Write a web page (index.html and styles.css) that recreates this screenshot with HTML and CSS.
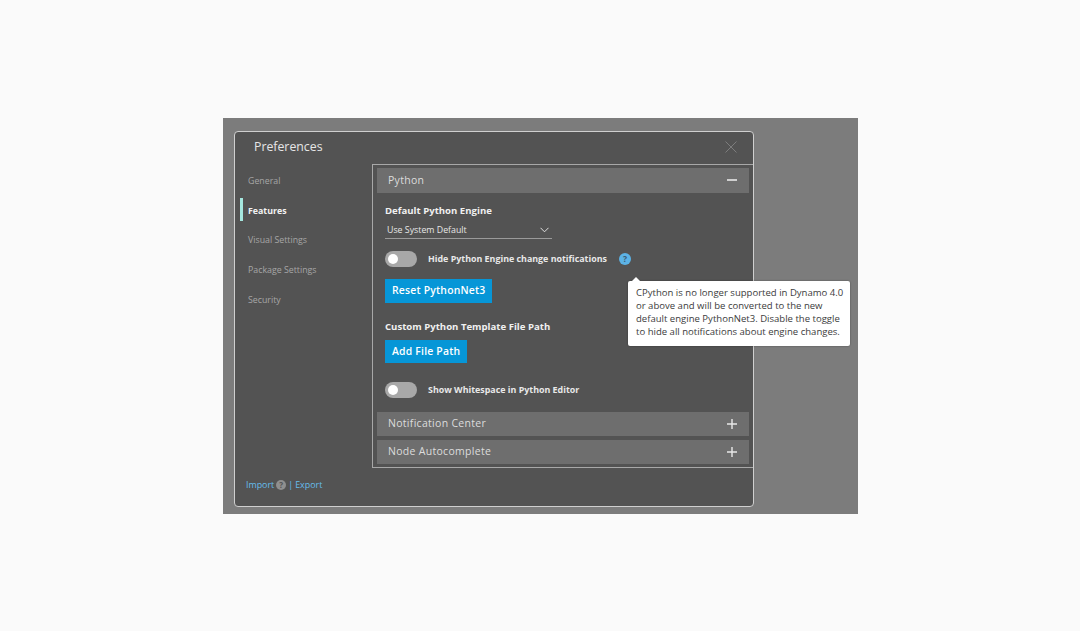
FILE: index.html
```html
<!DOCTYPE html>
<html lang="en">
<head>
    <meta charset="UTF-8">
    <meta name="viewport" content="width=device-width, initial-scale=1.0">
    <title>Preferences</title>
    <link rel="stylesheet" href="styles.css">
</head>
<body>
    <div class="backdrop">
        <div class="dialog">
            <div class="titlebar">
                <span class="title">Preferences</span>
                <svg class="close" width="12" height="12" viewBox="0 0 12 12"><path d="M0.5 0.5L11.5 11.5M11.5 0.5L0.5 11.5" stroke="#7d7d7d" stroke-width="1" fill="none"/></svg>
            </div>
            <div class="content">
                <div class="sidebar">
                    <div class="nav">
                        <div class="nav-item">General</div>
                        <div class="nav-item active">Features</div>
                        <div class="nav-item">Visual Settings</div>
                        <div class="nav-item">Package Settings</div>
                        <div class="nav-item">Security</div>
                    </div>
                    <div class="footer">
                        <span class="link">Import</span>
                        <span class="footer-help">?</span>
                        <span class="link">|</span>
                        <span class="link">Export</span>
                    </div>
                </div>
                <div class="panel">
                    <div class="section-head">
                        <span>Python</span>
                        <svg width="10" height="10" viewBox="0 0 10 10"><path d="M0 5H10" stroke="#e8e8e8" stroke-width="1.6"/></svg>
                    </div>
                    <div class="section-body">
                        <div class="label first">Default Python Engine</div>
                        <div class="select">
                            <span>Use System Default</span>
                            <svg width="9" height="6" viewBox="0 0 9 6"><path d="M0.5 0.8L4.5 4.8L8.5 0.8" stroke="#e0e0e0" stroke-width="1" fill="none"/></svg>
                        </div>
                        <div class="toggle-row">
                            <span class="toggle"><span class="knob"></span></span>
                            <span class="toggle-label">Hide Python Engine change notifications</span>
                            <span class="help">?</span>
                        </div>
                        <div class="btn reset">Reset PythonNet3</div>
                        <div class="label custom">Custom Python Template File Path</div>
                        <div class="btn add">Add File Path</div>
                        <div class="toggle-row second">
                            <span class="toggle"><span class="knob"></span></span>
                            <span class="toggle-label">Show Whitespace in Python Editor</span>
                        </div>
                    </div>
                    <div class="section-head closed">
                        <span>Notification Center</span>
                        <svg width="10" height="10" viewBox="0 0 10 10"><path d="M0 5H10M5 0V10" stroke="#e8e8e8" stroke-width="1.4"/></svg>
                    </div>
                    <div class="section-head closed last">
                        <span>Node Autocomplete</span>
                        <svg width="10" height="10" viewBox="0 0 10 10"><path d="M0 5H10M5 0V10" stroke="#e8e8e8" stroke-width="1.4"/></svg>
                    </div>
                </div>
            </div>
        </div>
        <div class="tooltip">
            CPython is no longer supported in Dynamo 4.0<br>
            or above and will be converted to the new<br>
            default engine PythonNet3. Disable the toggle<br>
            to hide all notifications about engine changes.
        </div>
    </div>
</body>
</html>
```

FILE: styles.css
```css
* {
    box-sizing: border-box;
}

body {
    margin: 0;
    height: 631px;
    padding: 118px 222px 0 223px;
    background-color: #fafafa;
    font-family: "Open Sans", "Noto Sans", sans-serif;
    overflow: hidden;
}

.backdrop {
    position: relative;
    width: 635px;
    height: 396px;
    padding: 13px 0 0 11px;
    background-color: #7c7c7c;
}

.dialog {
    width: 520px;
    height: 376px;
    background-color: #535353;
    border: 1px solid #cfcfcf;
    border-radius: 4px;
    display: flex;
    flex-direction: column;
}

.titlebar {
    height: 32px;
    flex: none;
    display: flex;
    align-items: center;
    justify-content: space-between;
    padding: 0 16px 4px 19px;
}

.title {
    font-size: 12.3px;
    color: #e6e6e6;
}

.close {
    margin-top: 2px;
}

.content {
    flex: 1;
    display: flex;
}

.sidebar {
    width: 137px;
    flex: none;
    display: flex;
    flex-direction: column;
    justify-content: space-between;
    padding: 2px 0 15px 0;
}

.nav-item {
    height: 29.75px;
    display: flex;
    align-items: center;
    padding-left: 13px;
    font-size: 8.8px;
    color: #a6a6a6;
}

.nav-item.active {
    color: #f2f2f2;
    font-weight: 700;
    position: relative;
}

.nav-item.active::before {
    content: "";
    position: absolute;
    left: 5px;
    top: 2px;
    width: 3px;
    height: 23px;
    background-color: #a5e8e0;
}

.footer {
    display: flex;
    align-items: center;
    gap: 2px;
    padding-left: 11px;
    font-size: 8.9px;
}

.link {
    color: #66bdec;
}

.footer-help {
    width: 10px;
    height: 10px;
    border-radius: 50%;
    background-color: #8f8f8f;
    color: #535353;
    font-size: 8px;
    font-weight: 700;
    line-height: 10px;
    text-align: center;
}

.panel {
    width: 381px;
    height: 304px;
    border: 1px solid #a8a8a8;
    border-right-width: 0;
    padding: 3px 4px 0 4px;
}

.section-head {
    height: 25px;
    display: flex;
    align-items: center;
    justify-content: space-between;
    padding: 0 12px 2px 11px;
    background-color: #6e6e6e;
    color: #dcdcdc;
    font-size: 10.5px;
    letter-spacing: 0.3px;
}

.section-head.closed {
    height: 24px;
    padding-bottom: 3px;
}

.section-head.closed svg {
    margin-top: 3px;
}

.section-head.last {
    margin-top: 4px;
}

.section-body {
    height: 219px;
    padding: 11px 0 0 8px;
}

.label {
    font-size: 9.6px;
    font-weight: 700;
    color: #f0f0f0;
    line-height: 14px;
}

.select {
    width: 167px;
    height: 18px;
    margin-top: 3px;
    display: flex;
    align-items: center;
    justify-content: space-between;
    padding: 0 3px 0 2px;
    border-bottom: 1px solid #9a9a9a;
    font-size: 8.8px;
    color: #e6e6e6;
}

.toggle-row {
    display: flex;
    align-items: center;
    margin-top: 12px;
    height: 16px;
}

.toggle-row.second {
    margin-top: 19px;
}

.toggle {
    width: 32px;
    height: 16px;
    flex: none;
    border-radius: 8px;
    background-color: #a8a8a8;
    padding: 3px;
}

.knob {
    display: block;
    width: 10px;
    height: 10px;
    border-radius: 50%;
    background-color: #ffffff;
}

.toggle-label {
    margin: 0 0 2px 11px;
    font-size: 8.9px;
    font-weight: 700;
    color: #e8e8e8;
}

.help {
    width: 12px;
    height: 12px;
    margin-left: 12px;
    border-radius: 50%;
    background-color: #5cb3e6;
    color: #3d5a70;
    font-size: 8.5px;
    font-weight: 700;
    line-height: 12px;
    text-align: center;
}

.btn {
    height: 24px;
    width: fit-content;
    padding: 0 7px 2px 7px;
    display: flex;
    align-items: center;
    background-color: #0696d7;
    color: #ffffff;
    font-size: 10.4px;
    font-weight: 600;
    letter-spacing: 0.2px;
}

.reset {
    margin-top: 12px;
}

.label.custom {
    margin-top: 17px;
}

.add {
    height: 23px;
    margin-top: 6px;
}

.tooltip {
    position: absolute;
    left: 405px;
    top: 163px;
    width: 222px;
    height: 65px;
    padding: 5px 0 0 8px;
    background-color: #ffffff;
    border-radius: 2px;
    box-shadow: 0 0 2px rgba(0, 0, 0, 0.4);
    color: #3c3c3c;
    font-size: 9.55px;
    line-height: 13px;
    white-space: nowrap;
}

.tooltip::before {
    content: "";
    position: absolute;
    left: 4px;
    top: -4px;
    width: 0;
    height: 0;
    border-left: 4px solid transparent;
    border-right: 4px solid transparent;
    border-bottom: 4px solid #ffffff;
}
```
